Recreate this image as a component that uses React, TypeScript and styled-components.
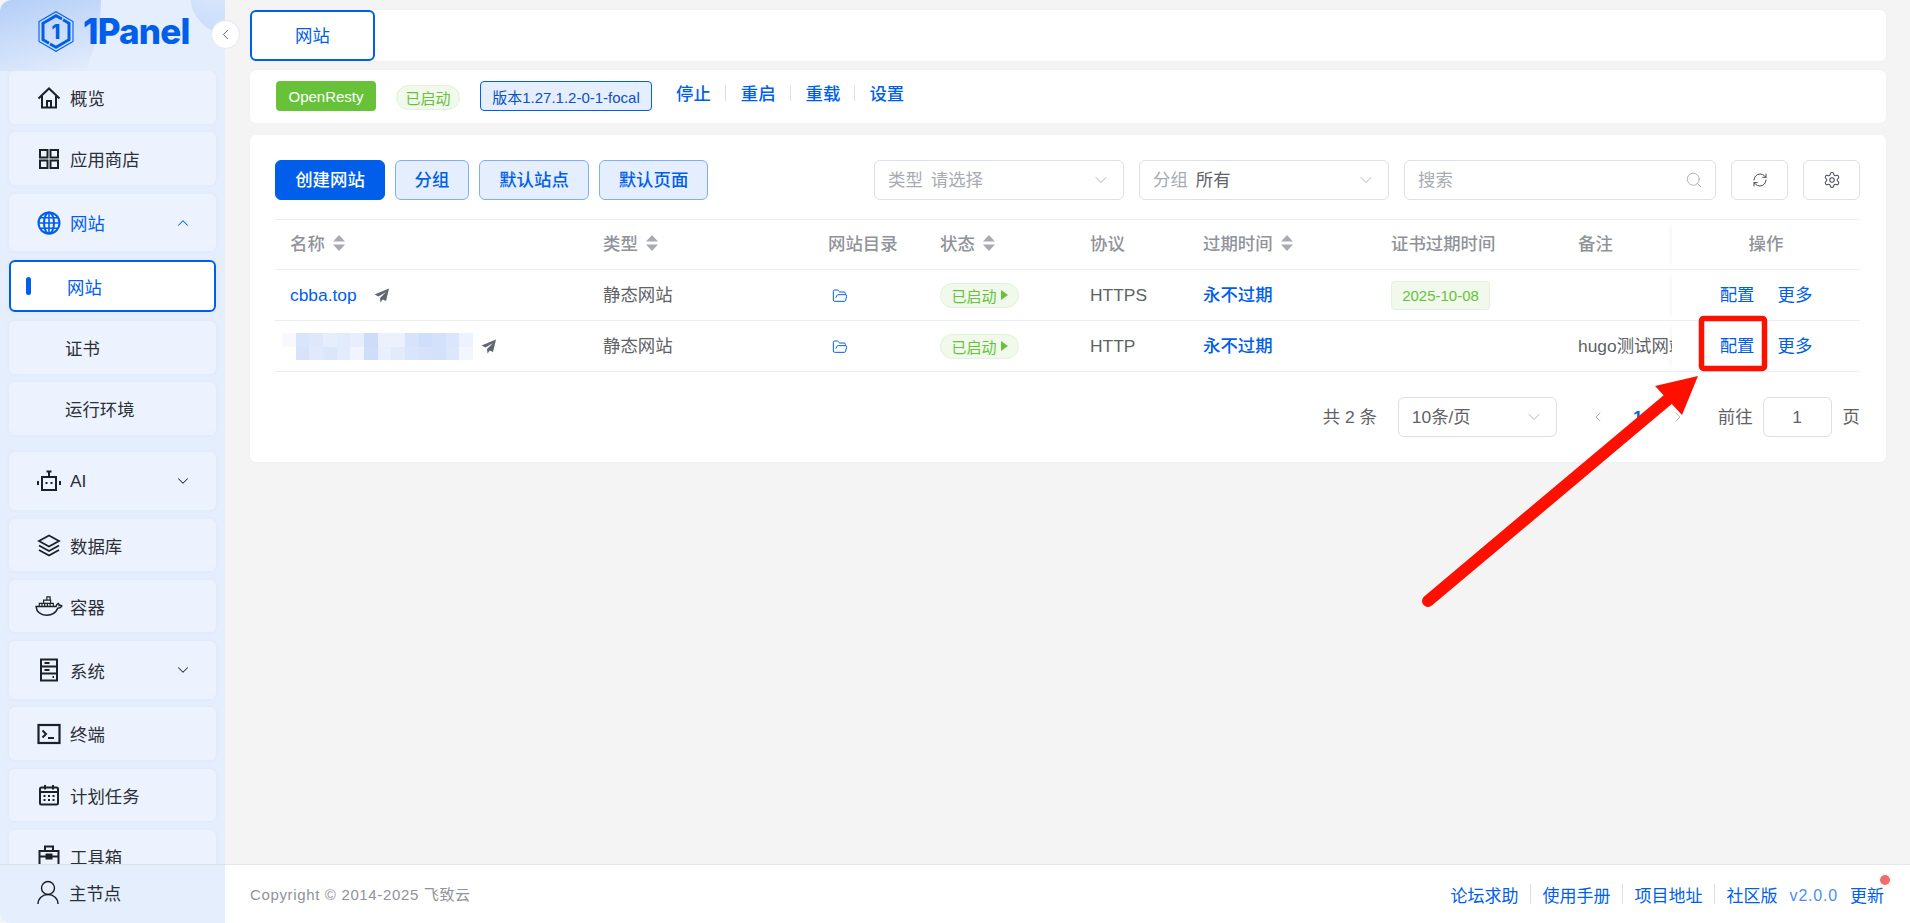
import React from 'react'
import styled, { createGlobalStyle } from 'styled-components'
import { ChevronDown, ChevronLeft, ChevronRight, ChevronUp, FolderOpen, RefreshCw, Search, Settings } from 'lucide-react'

const GlobalStyle = createGlobalStyle`
  html, body {
    margin: 0;
    padding: 0;
    background: #f4f4f5;
  }
  * {
    box-sizing: border-box;
  }
  body {
    font-family: "Liberation Sans", "Noto Sans CJK SC", sans-serif;
    font-size: 17.4px;
    color: #606266;
  }
`

const blue = '#005eeb'

const Page = styled.div`
  position: relative;
  display: flex;
  width: 1910px;
  height: 923px;
  overflow: hidden;
`

const Sidebar = styled.aside`
  position: relative;
  display: flex;
  flex-direction: column;
  flex: 0 0 225px;
  height: 923px;
  background: #e5eefd;
  border-radius: 12px 0 0 12px;
`

const LogoBar = styled.div`
  position: relative;
  flex: 0 0 71px;
  display: flex;
  align-items: flex-start;
  padding: 11px 0 0 38px;
  gap: 9px;
  overflow: hidden;
  border-radius: 12px 0 0 0;

  &::before {
    content: '';
    position: absolute;
    left: -222px;
    top: -160px;
    width: 323px;
    height: 323px;
    border-radius: 50%;
    background: linear-gradient(165deg, #a3c3f5 45%, #e5eefd 78%);
  }

  &::after {
    content: '';
    position: absolute;
    left: 190px;
    top: -45px;
    width: 80px;
    height: 80px;
    border-radius: 50%;
    background: linear-gradient(20deg, #cbdefa 15%, #e5eefd 75%);
  }

  & > * {
    position: relative;
    z-index: 1;
  }
`

const LogoText = styled.span`
  font-family: Inter, "Liberation Sans", sans-serif;
  font-size: 35px;
  line-height: 40px;
  font-weight: 800;
  letter-spacing: -0.8px;
  color: ${blue};
`

const CollapseButton = styled.div`
  position: absolute;
  left: 211px;
  top: 20px;
  z-index: 3;
  display: flex;
  align-items: center;
  justify-content: center;
  width: 29px;
  height: 29px;
  border-radius: 50%;
  background: #fff;
  border: 1px solid #e4e7ed;
  color: #606266;
`

const NavList = styled.nav`
  flex: 1;
  min-height: 0;
  overflow: hidden;
  padding: 0 9px;
`

const NavItem = styled.div<{ $h: number; $gap: number; $active?: boolean; $open?: boolean }>`
  display: flex;
  align-items: center;
  gap: 9px;
  height: ${p => p.$h}px;
  margin-top: ${p => p.$gap}px;
  padding: 0 24px 0 28px;
  border-radius: 6px;
  background: #edf3fe;
  box-shadow: 0 0 4px rgba(0, 94, 235, 0.05);
  color: ${p => (p.$open ? blue : '#2b2f36')};
  white-space: nowrap;

  & > svg:last-child:not(:first-child) {
    margin-left: auto;
  }
`

const SubItem = styled.div<{ $gap: number; $h: number; $active?: boolean }>`
  position: relative;
  display: flex;
  align-items: center;
  height: ${p => p.$h}px;
  margin-top: ${p => p.$gap}px;
  padding-left: 56px;
  border-radius: 6px;
  background: ${p => (p.$active ? '#fff' : '#edf3fe')};
  border: ${p => (p.$active ? `2px solid ${blue}` : 'none')};
  box-shadow: 0 0 4px rgba(0, 94, 235, 0.05);
  color: ${p => (p.$active ? blue : '#2b2f36')};
`

const ActiveBar = styled.span`
  position: absolute;
  left: 15px;
  top: 15px;
  width: 5px;
  height: 18px;
  border-radius: 3px;
  background: ${blue};
`

const NodeBar = styled.div`
  flex: 0 0 59px;
  display: flex;
  align-items: center;
  gap: 10px;
  padding: 0 0 3px 37px;
  background: #e5eefd;
  border-top: 1px solid #dcdfe6;
  border-radius: 0 0 0 12px;
  color: #2b2f36;
`

const Main = styled.div`
  flex: 1;
  min-width: 0;
  display: flex;
  flex-direction: column;
`

const Content = styled.main`
  flex: 1;
  padding: 10px 24px 0 25px;
`

const Card = styled.section`
  background: #fff;
  border-radius: 6px;
  box-shadow: 0 0 3px rgba(0, 0, 0, 0.03);
`

const TabCard = styled(Card)`
  height: 51px;
`

const Tab = styled.div`
  display: flex;
  align-items: center;
  justify-content: center;
  width: 125px;
  height: 51px;
  padding-bottom: 2px;
  border: 2px solid ${blue};
  border-radius: 6px;
  color: ${blue};
`

const StatusCard = styled(Card)`
  display: flex;
  align-items: center;
  height: 53px;
  margin-top: 9px;
  padding: 0 0 1px 26px;
`

const AppTag = styled.span`
  display: flex;
  align-items: center;
  justify-content: center;
  width: 100px;
  height: 30px;
  border-radius: 4px;
  background: #67c23a;
  color: #fff;
  font-size: 15px;
`

const StatusPill = styled.span<{ $arrow?: boolean }>`
  display: inline-flex;
  align-items: center;
  justify-content: center;
  gap: 4px;
  width: ${p => (p.$arrow ? 79 : 64)}px;
  height: 25px;
  border-radius: 13px;
  background: #f0f9eb;
  border: 1px solid #e1f3d8;
  color: #67c23a;
  font-size: 15px;
`

const RunningPill = styled(StatusPill)`
  margin: 2px 20px 0;
`

const VersionTag = styled.span`
  display: flex;
  align-items: center;
  justify-content: center;
  width: 172px;
  height: 30px;
  border: 1px solid ${blue};
  border-radius: 4px;
  background: #e5eefd;
  color: #0a52c4;
  font-size: 15px;
  white-space: nowrap;
`

const ServiceLinks = styled.div`
  display: flex;
  align-items: center;
  margin-left: 24px;
  padding-bottom: 7px;
  color: ${blue};
  font-weight: 500;
`

const Divider = styled.span<{ $h?: number; $space?: number }>`
  width: 1px;
  height: ${p => p.$h ?? 16}px;
  margin: 0 ${p => p.$space ?? 14}px;
  background: #dcdfe6;
`

const ListCard = styled(Card)`
  height: 327px;
  margin-top: 12px;
  padding: 25px 26px 0 25px;
`

const Toolbar = styled.div`
  display: flex;
  align-items: center;
  gap: 10px;
  height: 40px;
`

const Button = styled.button<{ $primary?: boolean; $w: number }>`
  width: ${p => p.$w}px;
  height: 40px;
  padding: 0 0 4px;
  border-radius: 6px;
  border: 1px solid ${p => (p.$primary ? blue : '#80aef5')};
  background: ${p => (p.$primary ? blue : '#e5eefd')};
  color: ${p => (p.$primary ? '#fff' : blue)};
  font: 500 17.4px "Liberation Sans", "Noto Sans CJK SC", sans-serif;
`

const Filters = styled.div`
  display: flex;
  align-items: center;
  gap: 15px;
  margin-left: auto;
`

const Field = styled.div<{ $w: number }>`
  display: flex;
  align-items: center;
  gap: 8px;
  width: ${p => p.$w}px;
  height: 40px;
  padding: 0 12px 0 13px;
  border: 1px solid #dcdfe6;
  border-radius: 6px;
  background: #fff;
  color: #a8abb2;
  white-space: nowrap;

  & > span {
    padding-bottom: 4px;
  }

  & > svg {
    margin-left: auto;
    flex: none;
  }
`

const FieldValue = styled.span`
  color: #606266;
`

const IconButton = styled.div`
  display: flex;
  align-items: center;
  justify-content: center;
  width: 57px;
  height: 40px;
  border: 1px solid #dcdfe6;
  border-radius: 6px;
  color: #4a4f57;
`

const Table = styled.div`
  margin-top: 19px;
  border-top: 1px solid #ebeef5;
`

const Row = styled.div<{ $h: number }>`
  display: grid;
  grid-template-columns: 313px 225px 112px 150px 113px 188px 187px 109px 188px;
  height: ${p => p.$h}px;
  border-bottom: 1px solid #ebeef5;
`

const Cell = styled.div<{ $pad?: number }>`
  display: flex;
  align-items: center;
  min-width: 0;
  padding-left: ${p => p.$pad ?? 15}px;
  overflow: hidden;
  white-space: nowrap;
`

const TextCell = styled(Cell)`
  padding-bottom: 4px;
`

const FolderCell = styled(Cell)`
  padding-top: 2px;
`

const HeadCell = styled(TextCell)`
  color: #909399;
  font-weight: 500;
  gap: 8px;
`

const FixedCell = styled.div`
  position: relative;
  z-index: 1;
  display: flex;
  align-items: center;
  justify-content: center;
  gap: 23px;
  padding-bottom: 4px;
  background: #fff;
  box-shadow: -4px 0 5px -4px rgba(0, 0, 0, 0.07);
`

const FixedHead = styled(FixedCell)`
  color: #909399;
  font-weight: 500;
`

const Link = styled.span<{ $bold?: boolean }>`
  color: ${blue};
  font-weight: ${p => (p.$bold ? 500 : 400)};
`

const DateTag = styled.span`
  display: flex;
  align-items: center;
  justify-content: center;
  width: 99px;
  height: 29px;
  border: 1px solid #e1f3d8;
  border-radius: 4px;
  background: #f0f9eb;
  color: #67c23a;
  font-size: 15px;
`

const Pager = styled.div`
  display: flex;
  align-items: center;
  justify-content: flex-end;
  height: 40px;
  margin-top: 25px;

  & > span {
    padding-bottom: 4px;
  }
`

const PagerTotal = styled.span`
  margin-right: 21px;
`

const PagerStep = styled.span<{ $current?: boolean }>`
  display: flex;
  align-items: center;
  justify-content: center;
  width: 40px;
  color: ${p => (p.$current ? blue : '#a8abb2')};
  font-weight: ${p => (p.$current ? 700 : 400)};
`

const PagerSteps = styled.div`
  display: flex;
  margin: 0 20px 0 21px;
`

const PageInput = styled.div`
  display: flex;
  align-items: center;
  justify-content: center;
  width: 69px;
  height: 40px;
  margin: 0 11px 0 10px;
  border: 1px solid #dcdfe6;
  border-radius: 6px;
`

const Footer = styled.footer`
  flex: 0 0 59px;
  display: flex;
  align-items: center;
  padding: 0 26px 0 25px;
  background: #fff;
  border-top: 1px solid #e4e7ed;
`

const Copyright = styled.span`
  padding-bottom: 2px;
  font-size: 15px;
  letter-spacing: 0.65px;
  color: #909399;
`

const FooterLinks = styled.div`
  display: flex;
  align-items: center;
  margin-left: auto;
  font-size: 17px;
  color: ${blue};
`

const Version = styled.span`
  margin: 0 12px;
  padding-top: 4px;
  font-size: 16px;
  letter-spacing: 0.8px;
  color: #4c8ef1;
`

const UpdateLink = styled.span`
  position: relative;

  &::after {
    content: '';
    position: absolute;
    right: -6px;
    top: -7px;
    width: 10px;
    height: 10px;
    border-radius: 50%;
    background: #f56c6c;
  }
`

const Annotation = styled.svg`
  position: absolute;
  left: 0;
  top: 0;
  z-index: 5;
  pointer-events: none;
`

type IconProps = { color?: string }

const NavIcon = ({ children, color = '#1d2026' }: React.PropsWithChildren<IconProps>) => (
  <svg width="24" height="24" viewBox="0 0 24 24" fill="none" stroke={color} strokeWidth="2" style={{ flex: 'none' }}>
    {children}
  </svg>
)

const HomeIcon = () => (
  <NavIcon>
    <path d="M1.5 12.5 12 2.5l10.5 10" />
    <path d="M5 10v11.5h14V10M10 21.5V15h4v6.5" />
  </NavIcon>
)

const GridIcon = () => (
  <NavIcon>
    <rect x="3" y="3" width="7.5" height="7.5" />
    <rect x="13.5" y="3" width="7.5" height="7.5" />
    <rect x="3" y="13.5" width="7.5" height="7.5" />
    <rect x="13.5" y="13.5" width="7.5" height="7.5" />
  </NavIcon>
)

const GlobeIcon = () => (
  <NavIcon color={blue}>
    <circle cx="12" cy="12" r="10.5" />
    <ellipse cx="12" cy="12" rx="5" ry="10.5" />
    <path d="M12 1.5v21M1.5 12h21M3 6.8h18M3 17.2h18" strokeWidth="1.6" />
  </NavIcon>
)

const BotIcon = () => (
  <NavIcon>
    <rect x="5" y="8" width="14" height="13" />
    <path d="M12 8V3M9.5 2.500h5M1 12v4M23 12v4" />
    <path d="M8.5 14h2M13.5 14h2" />
  </NavIcon>
)

const LayersIcon = () => (
  <NavIcon>
    <path d="M12 2.5 22 8l-10 5.500L2 8z" strokeWidth="1.8" />
    <path d="m2 12.500 10 5.500 10-5.500M2 17l10 5.500L22 17" strokeWidth="1.8" />
  </NavIcon>
)

const DockerIcon = () => (
  <svg width="28" height="24" viewBox="0 0 26 22" fill="none" stroke="#1d2026" strokeWidth="1.4" style={{ flex: 'none', margin: '0 -2px' }}>
    <path d="M1 11.500h18.500c.4-1.800 1.200-2.600 2-3 .7.700 1 1.400 1 2 1-.3 1.800 0 2.500.5-.8 1.500-2.200 2-3.800 2C19.500 17 15.500 19.500 11 19.500c-6 0-9.500-3-10-8z" />
    <path d="M4 11.500V8.500h13v3M6.500 8.500v3M9 8.500v3M11.500 8.500v3M14 8.500v3M8 8.500V5.500h6.500v3M11 5.500V2.500h3v3" strokeWidth="1.1" />
    <path d="M5.500 15.500h.1" strokeWidth="1.6" />
  </svg>
)

const ServerIcon = () => (
  <NavIcon>
    <rect x="4" y="1.5" width="16" height="21" />
    <path d="M4 8.500h16M4 15.500h16M7.500 5h5M7.500 12h5M15.500 19h1.500" />
  </NavIcon>
)

const TerminalIcon = () => (
  <NavIcon>
    <rect x="1.5" y="3" width="21" height="18" strokeWidth="2.2" />
    <path d="m5.500 8.500 3.500 3.500-3.500 3.500M11 16h6" />
  </NavIcon>
)

const CalendarIcon = () => (
  <NavIcon>
    <rect x="3" y="4.5" width="18" height="17" rx="1.5" />
    <path d="M8 2v4.500M16 2v4.500M3 9h18" />
    <path d="M6.500 13h2M11 13h2M15.500 13h2M6.500 17h2M11 17h2M15.500 17h2" />
  </NavIcon>
)

const ToolboxIcon = () => (
  <NavIcon>
    <rect x="2.5" y="7" width="19" height="15" />
    <path d="M8 7V2.500h8V7M2.500 12.500h19" />
    <rect x="9.5" y="10.5" width="5" height="4" fill="#1d2026" />
  </NavIcon>
)

const UserIcon = () => (
  <svg width="22" height="25" viewBox="0 0 22 25" fill="none" stroke="#1d2026" strokeWidth="1.4" style={{ flex: 'none' }}>
    <circle cx="11" cy="8" r="6.5" />
    <path d="M1 24c0-5.500 4.400-9.500 10-9.500S21 18.500 21 24" />
  </svg>
)

const LogoMark = () => (
  <svg width="36" height="41" viewBox="0 0 36 41" fill="none" style={{ flex: 'none' }}>
    <path d="M18 .7 35 10.500v20L18 40.300 1 30.500v-20z" stroke={blue} strokeWidth="1.1" />
    <path d="M24 8 18 4.800 5 12.300v16.400l6 3.500M12 33l6 3.200 13-7.500V12.300l-6-3.500" stroke={blue} strokeWidth="3" />
    <text x="18" y="28" textAnchor="middle" fontFamily="Inter, sans-serif" fontWeight="800" fontSize="20" fill={blue}>1</text>
  </svg>
)

const SortCaret = () => (
  <svg width="12" height="16" viewBox="0 0 12 16" fill="#a8abb2" style={{ flex: 'none' }}>
    <path d="M6 0l6 6.500H0zM6 16 0 9.500h12z" />
  </svg>
)

const PlaneIcon = () => (
  <svg width="15" height="15" viewBox="0 0 15 15" fill="#5f6670" style={{ flex: 'none' }}>
    <path d="M15 .5.500 6.500l4 2L12 4 6 10l.5 4.500 2.300-3L12 13z" />
  </svg>
)

const PlayCaret = () => (
  <svg width="7" height="10" viewBox="0 0 7 10" fill="#67c23a">
    <path d="M0 0l7 5-7 5z" />
  </svg>
)

const mosaicTop = ['#f7f9fe', '#d9e5fb', '#dde8fc', '#e6edfc', '#e1ebfc', '#e8eefc', '#cddcf9', '#ebf1fd', '#ebf1fd', '#d7e3fb', '#cfdefa', '#d4e1fb', '#dbe6fc', '#ecf2fe']
const mosaicBottom = ['#ffffff', '#d6e3fb', '#e0eafc', '#dce6fb', '#e1ebfc', '#f0f4fe', '#cfddfa', '#e9f0fd', '#e2ebfc', '#d9e5fc', '#d6e2fb', '#d3e1fb', '#dce7fc', '#f3f6fe']

// the masked domain in the second row
const Mosaic = () => (
  <svg width="191" height="27" viewBox="0 0 191 27" style={{ flex: 'none' }} shapeRendering="crispEdges">
    {[mosaicTop, mosaicBottom].map((row, r) =>
      row.map((fill, c) => <rect key={`${r}-${c}`} x={c * 13.65} y={r * 13.5} width="13.7" height="13.5" fill={fill} />),
    )}
  </svg>
)

const NameCell = styled(Cell)`
  gap: 17px;
`

const MaskedCell = styled(Cell)`
  gap: 8px;
`

type SiteRow = {
  name: React.ReactNode
  kind: string
  protocol: string
  cert?: string
  remark?: string
}

const sites: SiteRow[] = [
  {
    name: (
      <NameCell>
        <Link>cbba.top</Link>
        <PlaneIcon />
      </NameCell>
    ),
    kind: '静态网站',
    protocol: 'HTTPS',
    cert: '2025-10-08',
  },
  {
    name: (
      <MaskedCell $pad={7}>
        <Mosaic />
        <PlaneIcon />
      </MaskedCell>
    ),
    kind: '静态网站',
    protocol: 'HTTP',
    remark: 'hugo测试网站',
  },
]

export default function App() {
  return (
    <Page>
      <GlobalStyle />
      <Sidebar>
        <LogoBar>
          <LogoMark />
          <LogoText>1Panel</LogoText>
        </LogoBar>
        <CollapseButton>
          <ChevronLeft size={17} strokeWidth={1.4} />
        </CollapseButton>
        <NavList>
          <NavItem $h={53} $gap={0}><HomeIcon />概览</NavItem>
          <NavItem $h={53} $gap={8}><GridIcon />应用商店</NavItem>
          <NavItem $h={57} $gap={9} $open>
            <GlobeIcon />网站
            <ChevronUp size={18} strokeWidth={1.4} />
          </NavItem>
          <SubItem $h={52} $gap={9} $active><ActiveBar />网站</SubItem>
          <SubItem $h={53} $gap={9}>证书</SubItem>
          <SubItem $h={53} $gap={8}>运行环境</SubItem>
          <NavItem $h={58} $gap={17}>
            <BotIcon />AI
            <ChevronDown size={18} strokeWidth={1.4} />
          </NavItem>
          <NavItem $h={52} $gap={9}><LayersIcon />数据库</NavItem>
          <NavItem $h={52} $gap={9}><DockerIcon />容器</NavItem>
          <NavItem $h={58} $gap={9}>
            <ServerIcon />系统
            <ChevronDown size={18} strokeWidth={1.4} />
          </NavItem>
          <NavItem $h={53} $gap={8}><TerminalIcon />终端</NavItem>
          <NavItem $h={52} $gap={9}><CalendarIcon />计划任务</NavItem>
          <NavItem $h={52} $gap={9}><ToolboxIcon />工具箱</NavItem>
        </NavList>
        <NodeBar><UserIcon />主节点</NodeBar>
      </Sidebar>

      <Main>
        <Content>
          <TabCard>
            <Tab>网站</Tab>
          </TabCard>

          <StatusCard>
            <AppTag>OpenResty</AppTag>
            <RunningPill>已启动</RunningPill>
            <VersionTag>版本1.27.1.2-0-1-focal</VersionTag>
            <ServiceLinks>
              <span>停止</span>
              <Divider $space={14.5} />
              <span>重启</span>
              <Divider $space={14.5} />
              <span>重载</span>
              <Divider />
              <span>设置</span>
            </ServiceLinks>
          </StatusCard>

          <ListCard>
            <Toolbar>
              <Button $primary $w={110}>创建网站</Button>
              <Button $w={74}>分组</Button>
              <Button $w={110}>默认站点</Button>
              <Button $w={109}>默认页面</Button>
              <Filters>
                <Field $w={250}>
                  <span>类型</span>
                  <span>请选择</span>
                  <ChevronDown size={20} strokeWidth={1.1} />
                </Field>
                <Field $w={250}>
                  <span>分组</span>
                  <FieldValue>所有</FieldValue>
                  <ChevronDown size={20} strokeWidth={1.1} />
                </Field>
                <Field $w={312}>
                  <span>搜索</span>
                  <Search size={18} strokeWidth={1.2} />
                </Field>
                <IconButton><RefreshCw size={16} strokeWidth={1.5} /></IconButton>
                <IconButton><Settings size={18} strokeWidth={1.4} /></IconButton>
              </Filters>
            </Toolbar>

            <Table>
              <Row $h={50}>
                <HeadCell>名称<SortCaret /></HeadCell>
                <HeadCell>类型<SortCaret /></HeadCell>
                <HeadCell>网站目录</HeadCell>
                <HeadCell>状态<SortCaret /></HeadCell>
                <HeadCell>协议</HeadCell>
                <HeadCell>过期时间<SortCaret /></HeadCell>
                <HeadCell>证书过期时间</HeadCell>
                <HeadCell>备注</HeadCell>
                <FixedHead>操作</FixedHead>
              </Row>
              {sites.map(site => (
                <Row $h={51} key={site.protocol}>
                  {site.name}
                  <TextCell>{site.kind}</TextCell>
                  <FolderCell $pad={19}><FolderOpen size={16} color={blue} strokeWidth={1.5} /></FolderCell>
                  <Cell><StatusPill $arrow>已启动<PlayCaret /></StatusPill></Cell>
                  <Cell>{site.protocol}</Cell>
                  <TextCell><Link $bold>永不过期</Link></TextCell>
                  <Cell>{site.cert && <DateTag>{site.cert}</DateTag>}</Cell>
                  <TextCell>{site.remark}</TextCell>
                  <FixedCell>
                    <Link>配置</Link>
                    <Link>更多</Link>
                  </FixedCell>
                </Row>
              ))}
            </Table>

            <Pager>
              <PagerTotal>共 2 条</PagerTotal>
              <Field $w={159}>
                <FieldValue>10条/页</FieldValue>
                <ChevronDown size={20} strokeWidth={1.1} />
              </Field>
              <PagerSteps>
                <PagerStep><ChevronLeft size={16} strokeWidth={1.3} /></PagerStep>
                <PagerStep $current>1</PagerStep>
                <PagerStep><ChevronRight size={16} strokeWidth={1.3} /></PagerStep>
              </PagerSteps>
              <span>前往</span>
              <PageInput>1</PageInput>
              <span>页</span>
            </Pager>
          </ListCard>
        </Content>

        <Footer>
          <Copyright>Copyright © 2014-2025 飞致云</Copyright>
          <FooterLinks>
            <span>论坛求助</span>
            <Divider $h={20} $space={11.5} />
            <span>使用手册</span>
            <Divider $h={20} $space={11.5} />
            <span>项目地址</span>
            <Divider $h={20} $space={11.5} />
            <span>社区版</span>
            <Version>v2.0.0</Version>
            <UpdateLink>更新</UpdateLink>
          </FooterLinks>
        </Footer>
      </Main>

      <Annotation width="1910" height="923" viewBox="0 0 1910 923">
        <rect x="1701.500" y="318.500" width="63" height="50" rx="2" fill="none" stroke="#fe1000" strokeWidth="5.500" />
        <path d="M1428 601 1672 396" stroke="#fe1000" strokeWidth="12" strokeLinecap="round" />
        <path d="M1698 376 1655 386 1682 415z" fill="#fe1000" />
      </Annotation>
    </Page>
  )
}
